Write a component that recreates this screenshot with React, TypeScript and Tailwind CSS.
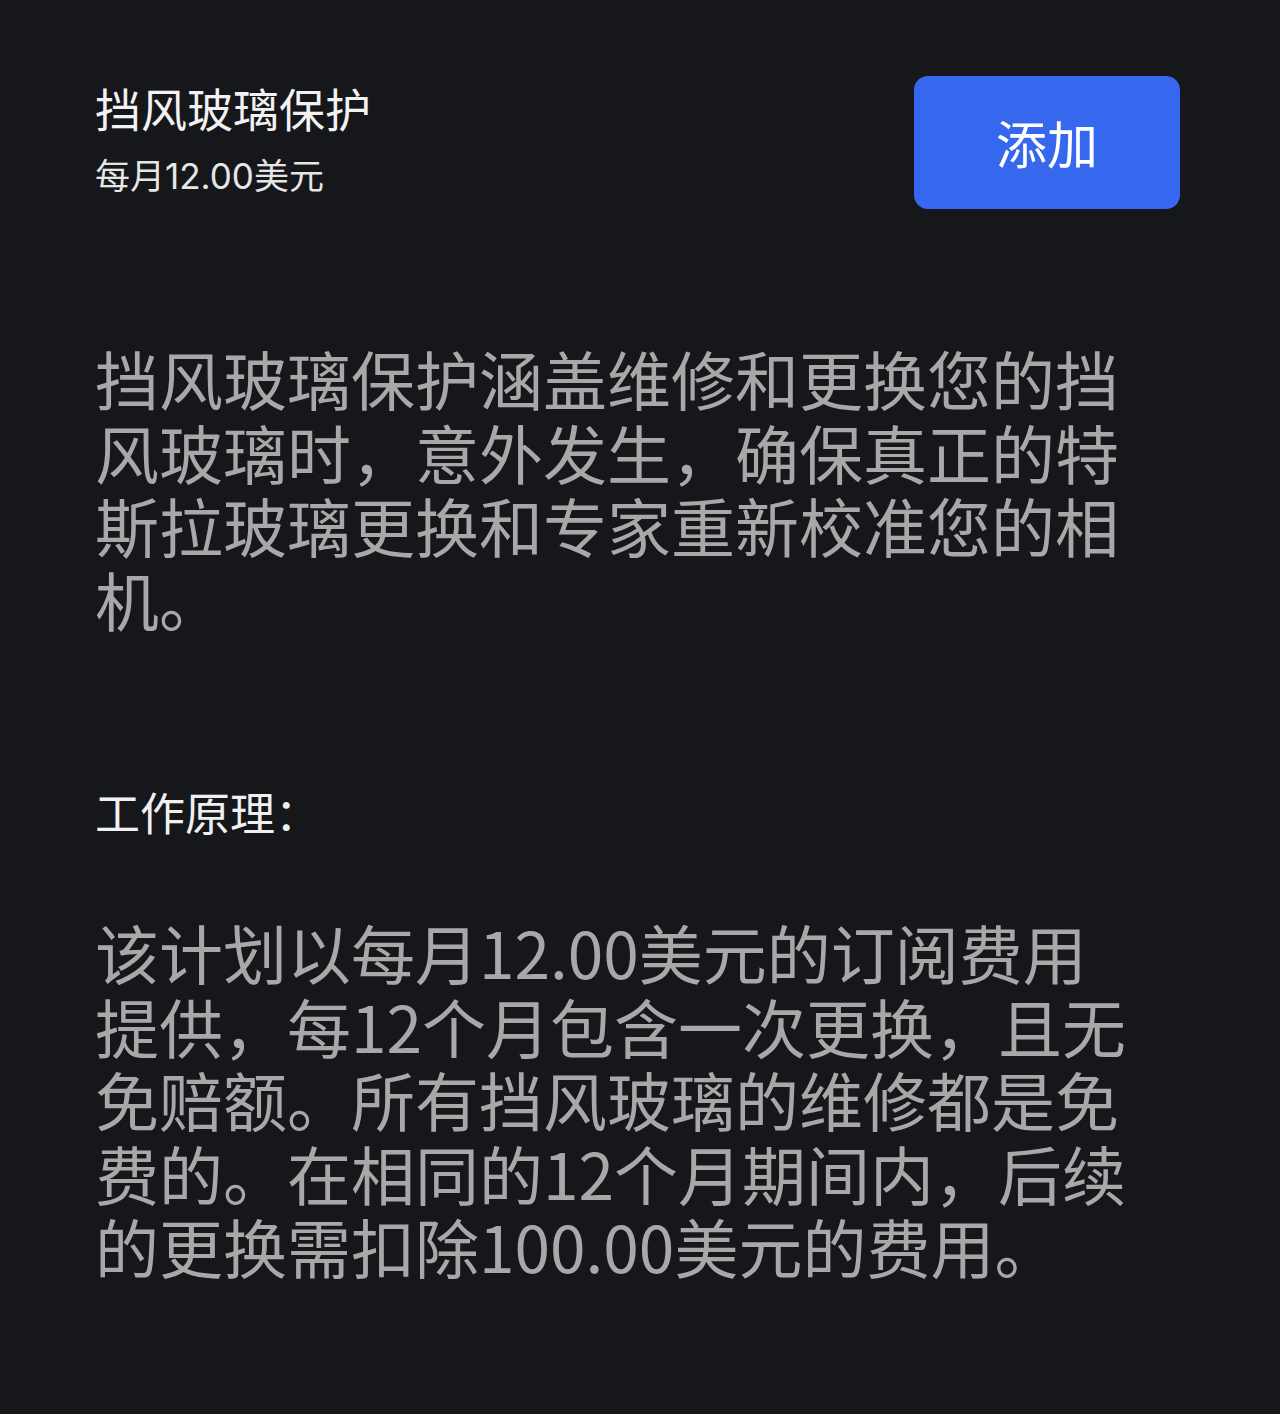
import React from "react";

const font = { fontFamily: '"Noto Sans CJK SC", "Noto Sans", sans-serif' };
const latinFirst = { fontFamily: 'Inter, "Noto Sans CJK SC", sans-serif' };

export default function App() {
	return (
		<div
			className="min-h-[1414px] w-full bg-[#16171b] px-[95px]"
			style={font}
		>
			{/* Header */}
			<div className="flex items-start justify-between pt-[76px] pr-[5px]">
				<div className="mt-[3px]">
					<h1 className="text-[46px] leading-[56px] text-[#f2f2f2]">
						挡风玻璃保护
					</h1>
					<p
						className="mt-[19px] text-[35px] leading-[44px] text-[#e6e6e6]"
						style={latinFirst}
					>
						每月12.00美元
					</p>
				</div>
				<button className="flex h-[133px] w-[266px] items-center justify-center rounded-[14px] bg-[#3568ee] text-[51px] text-white">
					添加
				</button>
			</div>

			{/* Description */}
			<p className="mt-[132px] w-[1040px] text-[64px] leading-[73.5px] text-[#a8a8a8]">
				挡风玻璃保护涵盖维修和更换您的挡风玻璃时，意外发生，确保真正的特斯拉玻璃更换和专家重新校准您的相机。
			</p>

			<h2 className="mt-[149px] text-[45px] leading-[56px] text-[#f0f0f0]">
				工作原理：
			</h2>

			<p className="mt-[75px] w-[1040px] text-[64px] leading-[73.5px] text-[#a8a8a8]">
				该计划以每月12.00美元的订阅费用提供，每12个月包含一次更换，且无免赔额。所有挡风玻璃的维修都是免费的。在相同的12个月期间内，后续的更换需扣除100.00美元的费用。
			</p>
		</div>
	);
}
